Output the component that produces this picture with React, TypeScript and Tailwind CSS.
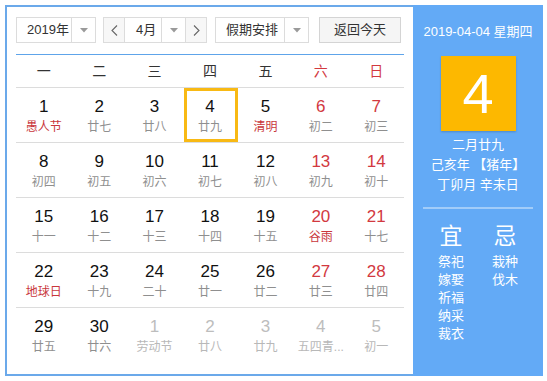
import React from "react";

type Day = { n: number; l: string; red?: boolean; fest?: boolean; out?: boolean; today?: boolean };

const weeks: Day[][] = [
  [
    { n: 1, l: "愚人节", fest: true },
    { n: 2, l: "廿七" },
    { n: 3, l: "廿八" },
    { n: 4, l: "廿九", today: true },
    { n: 5, l: "清明", fest: true },
    { n: 6, l: "初二", red: true },
    { n: 7, l: "初三", red: true },
  ],
  [
    { n: 8, l: "初四" },
    { n: 9, l: "初五" },
    { n: 10, l: "初六" },
    { n: 11, l: "初七" },
    { n: 12, l: "初八" },
    { n: 13, l: "初九", red: true },
    { n: 14, l: "初十", red: true },
  ],
  [
    { n: 15, l: "十一" },
    { n: 16, l: "十二" },
    { n: 17, l: "十三" },
    { n: 18, l: "十四" },
    { n: 19, l: "十五" },
    { n: 20, l: "谷雨", red: true, fest: true },
    { n: 21, l: "十七", red: true },
  ],
  [
    { n: 22, l: "地球日", fest: true },
    { n: 23, l: "十九" },
    { n: 24, l: "二十" },
    { n: 25, l: "廿一" },
    { n: 26, l: "廿二" },
    { n: 27, l: "廿三", red: true },
    { n: 28, l: "廿四", red: true },
  ],
  [
    { n: 29, l: "廿五" },
    { n: 30, l: "廿六" },
    { n: 1, l: "劳动节", out: true },
    { n: 2, l: "廿八", out: true },
    { n: 3, l: "廿九", out: true },
    { n: 4, l: "五四青...", out: true },
    { n: 5, l: "初一", out: true },
  ],
];

const weekdays = ["一", "二", "三", "四", "五", "六", "日"];

function Caret() {
  return (
    <div className="w-[24px] h-full flex items-center justify-center border-l border-[#dcdcdc]">
      <svg width="8" height="5" viewBox="0 0 8 5">
        <path d="M0 0 L8 0 L4 4.5 Z" fill="#9a9a9a" />
      </svg>
    </div>
  );
}

function Chevron({ dir }: { dir: "l" | "r" }) {
  return (
    <div
      className={
        "w-[21px] h-full flex items-center justify-center bg-[#f7f7f7] " +
        (dir === "l" ? "border-r border-[#dcdcdc]" : "border-l border-[#dcdcdc]")
      }
    >
      <svg width="7" height="11" viewBox="0 0 7 11">
        <path
          d={dir === "l" ? "M6 0.5 L1 5.5 L6 10.5" : "M1 0.5 L6 5.5 L1 10.5"}
          fill="none"
          stroke="#666"
          strokeWidth="1.1"
        />
      </svg>
    </div>
  );
}

export default function App() {
  return (
    <div
      className="pl-[5px] pt-[5px] bg-white"
      style={{ fontFamily: '"Liberation Sans", "Noto Sans CJK SC", sans-serif' }}
    >
      <div className="flex w-[538px] h-[371px]">
        {/* left calendar */}
        <div className="w-[408px] h-full border-2 border-r-0 border-[#6ba9ea] px-[9px] pt-[10px] text-[#222]">
          <div className="flex h-[26px] text-[13px] text-[#333]">
            <div className="flex w-[80px] h-full border border-[#dcdcdc] bg-white">
              <div className="flex-1 flex items-center pl-[10px]">2019年</div>
              <Caret />
            </div>
            <div className="flex w-[104px] h-full ml-[7px] border border-[#dcdcdc] bg-white">
              <Chevron dir="l" />
              <div className="flex-1 flex items-center pl-[11px]">4月</div>
              <Caret />
              <Chevron dir="r" />
            </div>
            <div className="flex w-[94px] h-full ml-[8px] border border-[#dcdcdc] bg-white">
              <div className="flex-1 flex items-center pl-[10px]">假期安排</div>
              <Caret />
            </div>
            <div className="w-[82px] h-full ml-[10px] border border-[#d4d4d4] bg-[#f5f5f5] flex items-center justify-center">
              返回今天
            </div>
          </div>

          <div className="mt-[11px] h-px bg-[#5ea4ea]" />

          <div className="grid grid-cols-7 h-[33px] border-b border-[#dcdcdc] text-[14px]">
            {weekdays.map((w, i) => (
              <div
                key={w}
                className={
                  "flex items-center justify-center " + (i >= 5 ? "text-[#d2393f]" : "text-[#333]")
                }
              >
                {w}
              </div>
            ))}
          </div>

          {weeks.map((row, ri) => (
            <div
              key={ri}
              className={
                "grid grid-cols-7 h-[55px] " + (ri < weeks.length - 1 ? "border-b border-[#dcdcdc]" : "")
              }
            >
              {row.map((d, ci) => (
                <div key={ci} className="relative flex flex-col items-center pt-[9px]">
                  {d.today && (
                    <div className="absolute left-[2px] right-0 top-0 bottom-0 border-[3px] border-[#f8b914]" />
                  )}
                  <div
                    className={
                      "text-[17px] leading-[20px] " +
                      (d.out ? "text-[#bdbdbd]" : d.red ? "text-[#d2393f]" : "text-[#111]")
                    }
                  >
                    {d.n}
                  </div>
                  <div
                    className={
                      "mt-[2px] text-[12px] leading-[16px] whitespace-nowrap " +
                      (d.out ? "text-[#b8b8b8]" : d.fest ? "text-[#c9373c]" : "text-[#8f8f8f]")
                    }
                  >
                    {d.l}
                  </div>
                </div>
              ))}
            </div>
          ))}
        </div>

        {/* right info panel */}
        <div className="w-[130px] h-full bg-[#63aaf6] text-white flex flex-col items-center">
          <div className="mt-[19px] text-[13px] leading-[16px]">2019-04-04 星期四</div>
          <div className="mt-[16px] w-[75px] h-[75px] bg-[#fdb800] shadow-[0_1px_2px_rgba(0,0,0,0.2)] flex items-center justify-center text-[56px] leading-none">
            4
          </div>
          <div className="mt-[4px] text-[13px] leading-[20px] text-center">
            <div>二月廿九</div>
            <div>己亥年 【猪年】</div>
            <div>丁卯月 辛未日</div>
          </div>
          <div className="mt-[12px] w-[110px] h-[2px] bg-white/40" />
          <div className="mt-[13px] flex">
            <div className="w-[54px] flex flex-col items-center">
              <div className="text-[23px] leading-[28px]">宜</div>
              <div className="mt-[3px] text-[13px] leading-[18px] text-center">
                <div>祭祀</div>
                <div>嫁娶</div>
                <div>祈福</div>
                <div>纳采</div>
                <div>裁衣</div>
              </div>
            </div>
            <div className="w-[54px] flex flex-col items-center">
              <div className="text-[23px] leading-[28px]">忌</div>
              <div className="mt-[3px] text-[13px] leading-[18px] text-center">
                <div>栽种</div>
                <div>伐木</div>
              </div>
            </div>
          </div>
        </div>
      </div>
    </div>
  );
}
